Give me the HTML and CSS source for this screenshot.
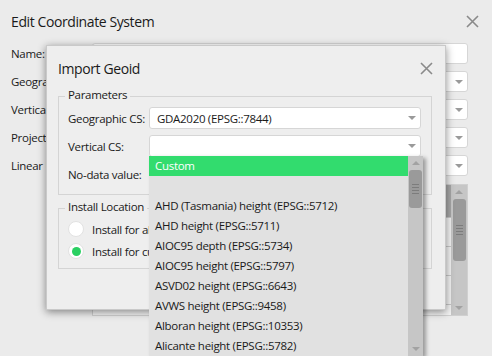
FILE: index.html
```html
<!DOCTYPE html>
<html lang="en">
<head>
<meta charset="UTF-8" />
<title>Import Geoid</title>
<link rel="stylesheet" href="styles.css">
</head>
<body>

<!-- background window -->
<div class="window">
  <div class="win-title">
    <span>Edit Coordinate System</span>
    <svg class="close" width="13" height="13" viewBox="0 0 13 13"><path d="M1 1L12 12M12 1L1 12" stroke="#8a8a8a" stroke-width="1.6" fill="none"/></svg>
  </div>
  <div class="form">
    <span class="lbl">Name:</span><div class="field"></div>
    <span class="lbl">Geographic CS:</span><div class="field combo"><i class="arrow"></i></div>
    <span class="lbl">Vertical CS:</span><div class="field combo"><i class="arrow"></i></div>
    <span class="lbl">Projection:</span><div class="field combo"><i class="arrow"></i></div>
    <span class="lbl">Linear Units:</span><div class="field combo"><i class="arrow"></i></div>
  </div>
  <div class="listbox">
    <div class="rows">
      <div class="row sel"></div>
      <div class="row"></div>
      <div class="row"></div>
      <div class="row"></div>
    </div>
    <div class="scrollbar big">
      <i class="up"></i>
      <div class="thumb"><b></b><b></b><b></b><b></b></div>
      <div class="spacer"></div>
      <i class="down"></i>
    </div>
  </div>
</div>

<!-- Import Geoid dialog -->
<div class="dialog">
  <div class="dlg-title">
    <span>Import Geoid</span>
    <svg class="close" width="13" height="13" viewBox="0 0 13 13"><path d="M1 1L12 12M12 1L1 12" stroke="#8a8a8a" stroke-width="1.6" fill="none"/></svg>
  </div>
  <div class="group">
    <span class="group-title">Parameters</span>
    <div class="params">
      <span>Geographic CS:</span><div class="field combo"><span>GDA2020 (EPSG::7844)</span><i class="arrow"></i></div>
      <span>Vertical CS:</span><div class="field combo"><i class="arrow"></i></div>
      <span>No-data value:</span><div class="field"></div>
    </div>
  </div>
  <div class="group install">
    <span class="group-title">Install Location</span>
    <label class="radio"><i class="dot"></i>Install for all users</label>
    <label class="radio"><i class="dot on"></i>Install for current user</label>
  </div>
</div>

<!-- open combo popup -->
<div class="popup">
  <div class="items">
    <div class="item current">Custom</div>
    <div class="item"></div>
    <div class="item">AHD (Tasmania) height (EPSG::5712)</div>
    <div class="item">AHD height (EPSG::5711)</div>
    <div class="item">AIOC95 depth (EPSG::5734)</div>
    <div class="item">AIOC95 height (EPSG::5797)</div>
    <div class="item">ASVD02 height (EPSG::6643)</div>
    <div class="item">AVWS height (EPSG::9458)</div>
    <div class="item">Alboran height (EPSG::10353)</div>
    <div class="item">Alicante height (EPSG::5782)</div>
  </div>
  <div class="scrollbar">
    <i class="up"></i>
    <div class="thumb"><b></b><b></b><b></b><b></b></div>
    <div class="spacer"></div>
    <i class="down"></i>
  </div>
</div>

</body>
</html>
```

FILE: styles.css
```css
body {
  margin: 0;
  width: 492px;
  height: 356px;
  overflow: hidden;
  background: #ebebeb;
  font-family: "Open Sans", "Noto Sans", sans-serif;
  font-size: 11.5px;
  letter-spacing: -0.3px;
  color: #1a1a1a;
}

/* background window */
.window { padding: 0 24px 0 11px; }
.win-title {
  height: 43px;
  display: flex;
  align-items: center;
  justify-content: space-between;
  font-size: 14px;
  letter-spacing: -0.4px;
  margin-right: -11px;
}
.form {
  display: grid;
  grid-template-columns: 81px 1fr;
  grid-auto-rows: 21px;
  row-gap: 7px;
  align-items: center;
}
.lbl, .params > span { white-space: nowrap; }
.field {
  height: 100%;
  box-sizing: border-box;
  background: #fff;
  border: 1px solid #d6d6d6;
  border-radius: 3px;
  position: relative;
  display: flex;
  align-items: center;
  padding-left: 6px;
}
.arrow {
  position: absolute;
  right: 4px;
  top: 50%;
  margin-top: -2px;
  border-left: 4px solid transparent;
  border-right: 4px solid transparent;
  border-top: 4px solid #9a9a9a;
}
.listbox {
  margin: 8px 0 0 81px;
  height: 132px;
  box-sizing: border-box;
  border: 1px solid #d0d0d0;
  background: #f3f3f3;
  display: flex;
}
.rows { flex: 1; }
.row { height: 28px; border-bottom: 1px solid #c8c8c8; }
.row.sel { height: 32px; background: #a6a6a6; }

/* scrollbars */
.scrollbar {
  width: 15px;
  background: #c6c6c6;
  display: flex;
  flex-direction: column;
  align-items: center;
}
.scrollbar .up, .scrollbar .down {
  border-left: 4px solid transparent;
  border-right: 4px solid transparent;
  margin: 5px 0;
}
.scrollbar .up { border-bottom: 4px solid #a2a2a2; }
.scrollbar .down { border-top: 4px solid #a2a2a2; }
.thumb {
  width: 13px;
  height: 38px;
  background: #9a9a9a;
  border-radius: 3px;
  display: flex;
  flex-direction: column;
  justify-content: center;
  align-items: center;
  gap: 2px;
}
.thumb b { width: 7px; height: 1px; background: #7c7c7c; }
.spacer { flex: 1; }
.big { width: 16px; }
.big .thumb { height: 62px; }

/* dialog */
.dialog {
  position: absolute;
  left: 46px;
  top: 45px;
  width: 400px;
  height: 265px;
  box-sizing: border-box;
  padding: 0 13px 0 11px;
  background: #eeeeee;
  border: 1px solid #c9c9c9;
  box-shadow: 0 2px 8px rgba(0, 0, 0, 0.45);
}
.dlg-title {
  height: 46px;
  box-sizing: border-box;
  padding-bottom: 2px;
  display: flex;
  align-items: center;
  justify-content: space-between;
  font-size: 14px;
  letter-spacing: -0.4px;
  margin-right: -1px;
}
.group {
  border: 1px solid #d4d4d4;
  padding: 0 10px 9px 9px;
  margin-top: 4px;
}
.group-title {
  display: block;
  width: max-content;
  height: 16px;
  line-height: 16px;
  margin: -10px 0 0 -3px;
  padding: 0 3px;
  background: #eeeeee;
}
.params {
  margin-top: 4px;
  display: grid;
  grid-template-columns: 81px 1fr;
  grid-auto-rows: 22px;
  row-gap: 6px;
  align-items: center;
}
.params .field { padding-left: 7px; }
.install { margin-top: 13px; padding-bottom: 6px; }
.install .group-title { margin-bottom: 3px; }
.radio {
  display: flex;
  align-items: center;
  height: 22px;
  white-space: nowrap;
}
.dot {
  width: 16px;
  height: 16px;
  box-sizing: border-box;
  border-radius: 50%;
  background: #fff;
  border: 1px solid #e2e2e2;
  margin-right: 8px;
  display: flex;
  align-items: center;
  justify-content: center;
}
.dot.on::after {
  content: "";
  width: 9px;
  height: 9px;
  border-radius: 50%;
  background: #2ad062;
}

/* popup list */
.popup {
  position: absolute;
  left: 149px;
  top: 156px;
  width: 274px;
  height: 200px;
  background: #e1e1e1;
  display: flex;
  box-shadow: 3px 2px 4px rgba(0, 0, 0, 0.35);
}
.items { flex: 1; }
.item {
  height: 20px;
  line-height: 20px;
  padding-left: 6px;
  white-space: nowrap;
}
.item.current { background: #32dc6e; color: #fff; }
```
